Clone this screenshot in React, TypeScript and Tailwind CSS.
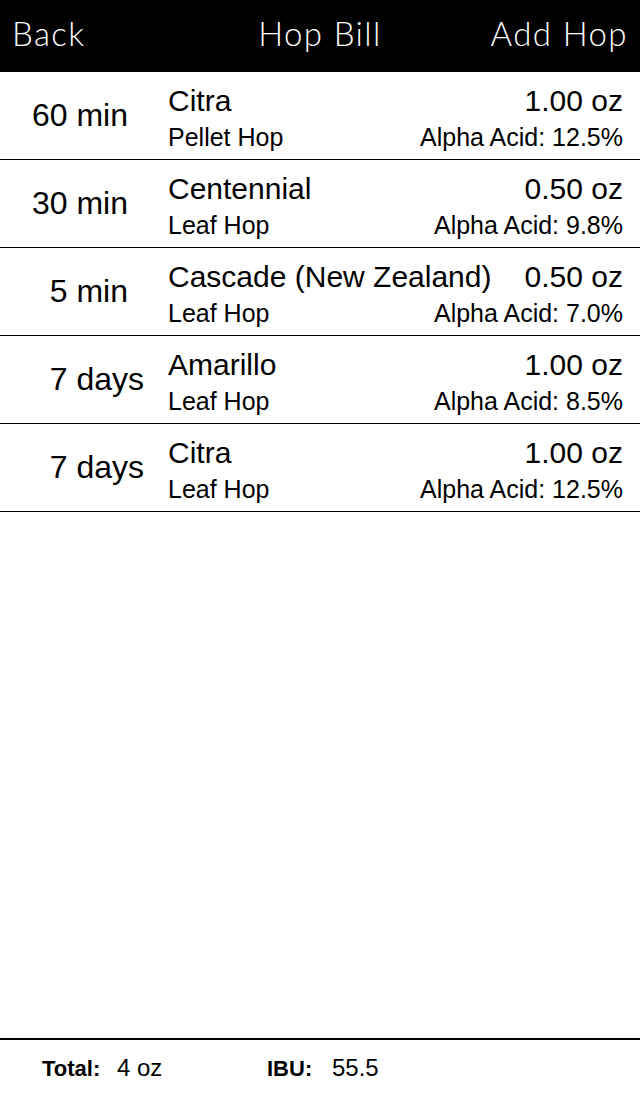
const hops = [
  { time: "60 min", timePad: "pr-4", name: "Citra", form: "Pellet Hop", amount: "1.00 oz", alpha: "12.5%" },
  { time: "30 min", timePad: "pr-4", name: "Centennial", form: "Leaf Hop", amount: "0.50 oz", alpha: "9.8%" },
  { time: "5 min", timePad: "pr-4", name: "Cascade (New Zealand)", form: "Leaf Hop", amount: "0.50 oz", alpha: "7.0%" },
  { time: "7 days", timePad: "pr-0", name: "Amarillo", form: "Leaf Hop", amount: "1.00 oz", alpha: "8.5%" },
  { time: "7 days", timePad: "pr-0", name: "Citra", form: "Leaf Hop", amount: "1.00 oz", alpha: "12.5%" },
];

function HopRow({ hop }: { hop: (typeof hops)[number] }) {
  return (
    <div className="flex h-[88px] border-b border-black">
      <div className={`w-[144px] shrink-0 flex items-center justify-end pb-0.5 text-[32px] leading-none ${hop.timePad}`}>
        {hop.time}
      </div>
      <div className="flex-1 pl-6 pr-[17px] pt-3">
        <div className="flex justify-between text-[30px] leading-[34px]">
          <span>{hop.name}</span>
          <span>{hop.amount}</span>
        </div>
        <div className="flex justify-between mt-1 text-[25px] leading-[30px]">
          <span>{hop.form}</span>
          <span>Alpha Acid: {hop.alpha}</span>
        </div>
      </div>
    </div>
  );
}

export default function App() {
  return (
    <div className="h-screen flex flex-col bg-white text-black font-['Liberation_Sans',Arial,sans-serif]">
      {/* Nav bar */}
      <header className="h-[72px] shrink-0 bg-black text-white grid grid-cols-3 items-center px-3 pb-[6px] font-['Lato',sans-serif] font-light text-[33px] leading-none tracking-[1.4px]">
        <span className="text-left">Back</span>
        <span className="text-center">Hop Bill</span>
        <span className="text-right">Add Hop</span>
      </header>

      <div>
        {hops.map((hop, i) => (
          <HopRow key={i} hop={hop} />
        ))}
      </div>

      <div className="flex-1" />

      {/* Totals */}
      <footer className="h-[58px] shrink-0 border-t-2 border-black flex items-center pl-[42px] text-[24px] leading-none">
        <span className="w-[225px] flex items-baseline">
          <b className="text-[22px] w-[75px]">Total:</b>
          <span>4 oz</span>
        </span>
        <span className="flex items-baseline">
          <b className="text-[22px] w-[65px]">IBU:</b>
          <span>55.5</span>
        </span>
      </footer>
    </div>
  );
}
